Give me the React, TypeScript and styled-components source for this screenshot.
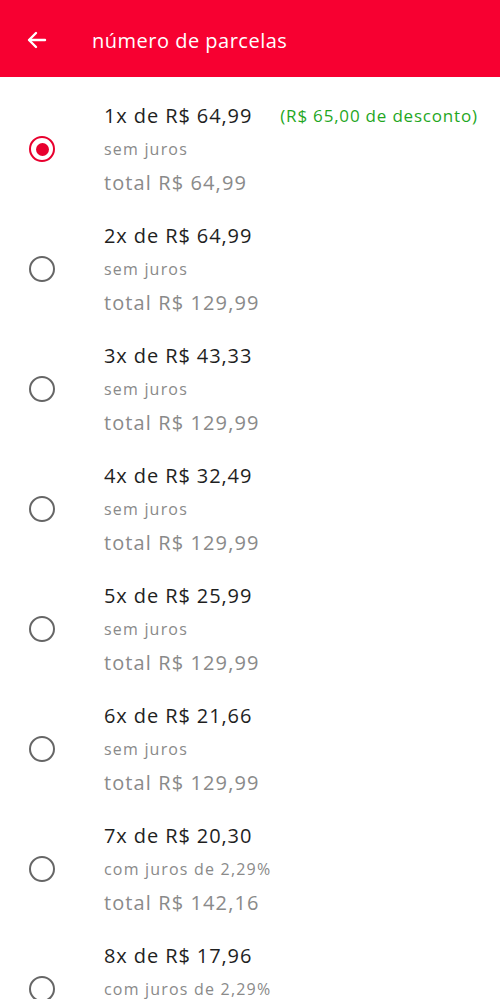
import React, { useState } from 'react'
import styled, { createGlobalStyle } from 'styled-components'

const GlobalStyle = createGlobalStyle`
	html, body {
		margin: 0;
		padding: 0;
		background: #ffffff;
	}
	body {
		font-family: "Open Sans", "Noto Sans", sans-serif;
	}
`

type Parcela = {
	n: number
	valor: string
	juros: string
	total: string
	desconto?: string
}

const parcelas: Parcela[] = [
	{ n: 1, valor: '64,99', juros: 'sem juros', total: '64,99', desconto: '(R$ 65,00 de desconto)' },
	{ n: 2, valor: '64,99', juros: 'sem juros', total: '129,99' },
	{ n: 3, valor: '43,33', juros: 'sem juros', total: '129,99' },
	{ n: 4, valor: '32,49', juros: 'sem juros', total: '129,99' },
	{ n: 5, valor: '25,99', juros: 'sem juros', total: '129,99' },
	{ n: 6, valor: '21,66', juros: 'sem juros', total: '129,99' },
	{ n: 7, valor: '20,30', juros: 'com juros de 2,29%', total: '142,16' },
	{ n: 8, valor: '17,96', juros: 'com juros de 2,29%', total: '160,64' },
]

const App: React.FC = () => {
	const [selected, setSelected] = useState<number>(1)

	return (
		<Page>
			<GlobalStyle />
			<Header>
				<BackBtn aria-label="voltar">
					<svg width="24" height="24" viewBox="0 0 24 24" fill="none" stroke="#fff" strokeWidth="2.4" strokeLinecap="round" strokeLinejoin="round">
						<path d="M20 12H4.5" />
						<path d="M11 5l-7 7 7 7" />
					</svg>
				</BackBtn>
				<Title>número de parcelas</Title>
			</Header>

			<List>
				{parcelas.map((p) => (
					<Row key={p.n} onClick={() => setSelected(p.n)}>
						<RadioCell>
							<Radio $checked={selected === p.n} />
						</RadioCell>
						<Info>
							<TopLine>
								<Amount>{p.n}x de R$ {p.valor}</Amount>
								{p.desconto && <Discount>{p.desconto}</Discount>}
							</TopLine>
							<Interest>{p.juros}</Interest>
							<Total>total R$ {p.total}</Total>
						</Info>
					</Row>
				))}
			</List>
		</Page>
	)
}
export default App

const Page = styled.div`
	width: 500px;
	height: 999px;
	overflow: hidden;
	background: #fff;
`

const Header = styled.header`
	height: 77px;
	background: #f70031;
	display: flex;
	align-items: center;
	box-sizing: border-box;
	padding-left: 25px;
	padding-top: 3px;
`

const BackBtn = styled.button`
	border: none;
	background: transparent;
	padding: 0;
	width: 24px;
	height: 24px;
	display: flex;
	align-items: center;
	justify-content: center;
	margin-right: 43px;
`

const Title = styled.h1`
	margin: 0;
	color: #fff;
	font-size: 20px;
	font-weight: 400;
	letter-spacing: 0.5px;
`

const List = styled.div`
	padding-top: 12px;
	display: flex;
	flex-direction: column;
`

const Row = styled.div`
	height: 120px;
	box-sizing: border-box;
	padding: 9px 0;
	display: flex;
	align-items: center;
`

const RadioCell = styled.div`
	width: 104px;
	display: flex;
	padding-left: 29px;
	box-sizing: border-box;
`

const Radio = styled.span<{ $checked: boolean }>`
	width: 26px;
	height: 26px;
	box-sizing: border-box;
	border-radius: 50%;
	border: 2.5px solid ${(p) => (p.$checked ? '#e8002e' : '#666666')};
	display: flex;
	align-items: center;
	justify-content: center;

	&::after {
		content: '';
		width: 13px;
		height: 13px;
		border-radius: 50%;
		background: #e8002e;
		display: ${(p) => (p.$checked ? 'block' : 'none')};
	}
`

const Info = styled.div`
	display: flex;
	flex-direction: column;
	flex: 1;
`

const TopLine = styled.div`
	display: flex;
	align-items: center;
	height: 34px;
	white-space: nowrap;
`

const Amount = styled.span`
	font-size: 20px;
	letter-spacing: 0.9px;
	color: #1f1f1f;
	margin-right: 28px;
`

const Discount = styled.span`
	font-size: 17px;
	letter-spacing: 0.8px;
	color: #1fa71f;
`

const Interest = styled.div`
	font-size: 16px;
	letter-spacing: 1.2px;
	color: #8a8a8a;
	height: 34px;
	line-height: 34px;
`

const Total = styled.div`
	font-size: 20px;
	letter-spacing: 1.1px;
	color: #8a8a8a;
	height: 34px;
	line-height: 34px;
`
